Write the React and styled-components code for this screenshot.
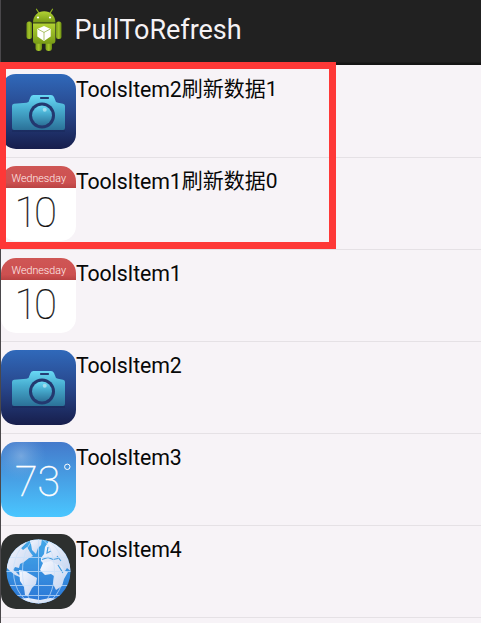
import React from "react";
import styled, { createGlobalStyle } from "styled-components";

const GlobalStyle = createGlobalStyle`
  * { box-sizing: border-box; }
  body { margin: 0; background: #f7f3f7; overflow: hidden; }
`;

const Screen = styled.main`
  position: relative;
  width: 481px;
  height: 623px;
  background: #f7f3f7;
  border-left: 1px solid #4a484b;
  font-family: Roboto, "Noto Sans CJK SC", sans-serif;
`;

const ActionBar = styled.header`
  display: flex;
  align-items: center;
  height: 65px;
  padding: 0 0 6px 23px;
  background: linear-gradient(#212121 0 62px, #151515 63px);
`;

const AppTitle = styled.h1`
  margin: 1px 0 0 7.5px;
  color: #f5f2f5;
  font-size: 27px;
  font-weight: 400;
  line-height: 32px;
  letter-spacing: -0.05px;
  white-space: nowrap;
`;

const List = styled.ul`
  margin: 1px 0 0;
  padding: 0;
  list-style: none;
`;

const Row = styled.li`
  display: flex;
  align-items: flex-start;
  height: 92px;
  padding-top: 8px;
  border-bottom: 1px solid #e5e1e5;
`;

const Label = styled.span`
  display: flex;
  color: #080808;
  font-size: 21.3px;
  line-height: 25px;
  letter-spacing: -0.12px;
  margin-top: 3px;
  white-space: nowrap;
`;

const Suffix = styled.span`
  font-size: 21px;
  letter-spacing: 0;
`;

const Art = styled.svg`
  display: block;
  flex: none;
`;

const Highlight = styled.div`
  position: absolute;
  left: -1px;
  top: 62px;
  width: 336px;
  height: 187px;
  border: 7px solid #fe3837;
  border-left-width: 6px;
`;

function AndroidLogo() {
  return (
    <Art width="43" height="46" viewBox="0 0 43 46">
      <defs>
        <linearGradient id="green" x2="0" y2="1">
          <stop stopColor="#b3d334" />
          <stop offset="1" stopColor="#789b16" />
        </linearGradient>
        <linearGradient id="arm">
          <stop stopColor="#779b16" />
          <stop offset=".5" stopColor="#a5c52b" />
          <stop offset="1" stopColor="#688b10" />
        </linearGradient>
      </defs>
      <path d="M12.5 2.2l3.5 5.5M28.5 2.2l-3.5 5.5" stroke="#91b320" strokeWidth="1.2" strokeLinecap="round" />
      <rect x="11.5" y="33" width="6.5" height="11" rx="3" fill="url(#arm)" />
      <rect x="21.5" y="33" width="6.5" height="11" rx="3" fill="url(#arm)" />
      <rect x="2.5" y="14.5" width="5.5" height="17.5" rx="2.5" fill="url(#arm)" />
      <rect x="32" y="14.5" width="5.5" height="17.5" rx="2.5" fill="url(#arm)" />
      <path d="M9 15.5C9 8.5 14 4.2 20.2 4.2S31.4 8.5 31.4 15.5z" fill="url(#green)" />
      <path d="M9 16.2h22.4v17.6q0 3-3 3H12q-3 0-3-3z" fill="url(#green)" />
      <path d="M9 16h22.4" stroke="#4d6811" strokeWidth=".8" />
      <circle cx="14" cy="10.5" r="1.1" fill="white" />
      <circle cx="26" cy="10.5" r="1.1" fill="white" />
      <path d="M20 19l6.7 3v7.5L20 34l-6.7-4.5V22z" fill="#fff" />
      <path d="M14 22.2l6 3.2 6-3.2M20 25v8" fill="none" stroke="#a4bd5e" strokeWidth=".9" />
    </Art>
  );
}

function CameraIcon() {
  return (
    <Art width="75" height="75" viewBox="0 0 75 75">
      <defs>
        <linearGradient id="navy" x2="0" y2="1">
          <stop stopColor="#3069ba" />
          <stop offset=".5" stopColor="#28468b" />
          <stop offset="1" stopColor="#171e4c" />
        </linearGradient>
        <linearGradient id="cyan" x2="0" y2="1">
          <stop stopColor="#69d9f5" />
          <stop offset=".4" stopColor="#48add0" />
          <stop offset="1" stopColor="#2b7198" />
        </linearGradient>
      </defs>
      <rect width="75" height="75" rx="15" fill="url(#navy)" />
      <path d="M11 57h53" stroke="#17234f" opacity=".6" />
      <path d="M11 32q0-2 2-2.2l12.5-1 2-.8 2-5q.8-2 3-2H50q2 0 3 2l2 5 2 .8 5 1q2 .4 2 2.2v22q0 2-2 2H13q-2 0-2-2z" fill="url(#cyan)" />
      <rect x="39" y="23" width="9" height="2" rx=".7" fill="#243d75" />
      <circle cx="41" cy="41.5" r="13" fill="#23386f" />
      <circle cx="41" cy="41.5" r="10" fill="url(#cyan)" />
      <circle cx="43.7" cy="35.8" r="2" fill="#a1dcee" />
    </Art>
  );
}

function CalendarIcon() {
  return (
    <Art width="75" height="75" viewBox="0 0 75 75">
      <defs>
        <clipPath id="calendar-shape"><rect width="75" height="75" rx="15" /></clipPath>
        <linearGradient id="red" x2="0" y2="1">
          <stop stopColor="#cf5655" />
          <stop offset=".75" stopColor="#cd5050" />
          <stop offset="1" stopColor="#b94343" />
        </linearGradient>
      </defs>
      <g clipPath="url(#calendar-shape)">
        <rect width="75" height="75" fill="white" />
        <rect width="75" height="22" fill="url(#red)" />
      </g>
      <text x="10.5" y="16" fill="#fff0ef" fontFamily="Roboto" fontSize="11" fontWeight="300" textLength="54.5" lengthAdjust="spacingAndGlyphs">Wednesday</text>
      <text x="13.5" y="60.7" fill="#151515" stroke="#151515" strokeWidth=".2" fontFamily="Roboto, Lato" fontSize="42" fontWeight="100" textLength="42.5" lengthAdjust="spacing">10</text>
    </Art>
  );
}

function WeatherIcon() {
  return (
    <Art width="75" height="75" viewBox="0 0 75 75">
      <defs>
        <linearGradient id="sky" x2="0" y2="1">
          <stop stopColor="#447acb" />
          <stop offset="1" stopColor="#4ac6ff" />
        </linearGradient>
        <radialGradient id="cloud" cx="20" cy="14" r="25" gradientUnits="userSpaceOnUse">
          <stop stopColor="#a3c4e8" stopOpacity=".52" />
          <stop offset="1" stopColor="#6eaae0" stopOpacity="0" />
        </radialGradient>
      </defs>
      <rect width="75" height="75" rx="15" fill="url(#sky)" />
      <rect width="75" height="75" rx="15" fill="url(#cloud)" />
      <text x="14" y="54" fill="white" stroke="white" strokeWidth=".45" fontFamily="Roboto, Lato" fontSize="42" fontWeight="100" textLength="45" lengthAdjust="spacingAndGlyphs">73</text>
      <circle cx="66.3" cy="24.8" r="2.7" stroke="white" fill="none" />
    </Art>
  );
}

function GlobeIcon() {
  return (
    <Art width="75" height="75" viewBox="0 0 75 75">
      <defs>
        <clipPath id="globe-shape"><circle cx="37.5" cy="37.5" r="32" /></clipPath>
        <linearGradient id="ocean" x2="0" y2="1">
          <stop stopColor="#45a9e9" />
          <stop offset="1" stopColor="#2b76d6" />
        </linearGradient>
        <linearGradient id="land" x2="1" y2="1">
          <stop stopColor="#f7f9ff" />
          <stop offset="1" stopColor="#c4d3ef" />
        </linearGradient>
      </defs>
      <rect width="75" height="75" rx="15" fill="#2d302f" />
      <g clipPath="url(#globe-shape)">
        <rect x="5" y="5" width="65" height="65" fill="url(#ocean)" />
        <g fill="url(#land)">
          <path d="M4 32V16L16 6l10-2-1 5-5 5 2 2 4-3 3 5 3 4-4 2-5 4-4 2-1 4-4-1-2 3 3 2 3 3 5 1-2 2-7-3-5-4z" />
          <path d="M28 5h13l-1 6-3 3-2 6-4-4-1-6z" />
          <path d="M40 24l3-4 1-7 4-6 6 2 6 4 5 6 6 13v6l-5-4-2 3-5-4-5-3-3 2-4-4-4 2-3-3z" />
          <path d="M18 36l6 1 5 3 7 4-1 6-4 4-4 8-3-1-1-8-4-6z" />
          <path d="M42 29l8-2 5 3 6 2 3 5 3 1-4 7-2 7-6 4-3-6 1-8-3-2-6 1-5-5z" />
          <path d="M16 65l11-1 12 2 10-2 9 1-3 7H21z" />
        </g>
        <path d="M41 25.5l6-2 5 2 5-1M47 13l-1 6 4-2M56 22l4 5M57 31l5 8" stroke="#469ede" strokeWidth="1.2" fill="none" />
        <g stroke="#c9e1fb" strokeWidth="1" opacity=".72" fill="none">
          <path d="M37.5 5v65M5 37.5h65M7 51.5h61M13 61.5h49M9 23.5h57" />
          <ellipse cx="37.5" cy="37.5" rx="16" ry="33" />
          <ellipse cx="37.5" cy="37.5" rx="25" ry="33" />
        </g>
      </g>
    </Art>
  );
}

const items = [
  { name: "ToolsItem2", suffix: "刷新数据1", Icon: CameraIcon },
  { name: "ToolsItem1", suffix: "刷新数据0", Icon: CalendarIcon },
  { name: "ToolsItem1", Icon: CalendarIcon },
  { name: "ToolsItem2", Icon: CameraIcon },
  { name: "ToolsItem3", Icon: WeatherIcon },
  { name: "ToolsItem4", Icon: GlobeIcon },
];

export default function App() {
  return (
    <>
      <GlobalStyle />
      <Screen>
        <ActionBar>
          <AndroidLogo />
          <AppTitle>PullToRefresh</AppTitle>
        </ActionBar>
        <List>
          {items.map(({ name, suffix, Icon }, index) => (
            <Row key={index}>
              <Icon />
              <Label>{name}{suffix && <Suffix>{suffix}</Suffix>}</Label>
            </Row>
          ))}
        </List>
        <Highlight />
      </Screen>
    </>
  );
}
